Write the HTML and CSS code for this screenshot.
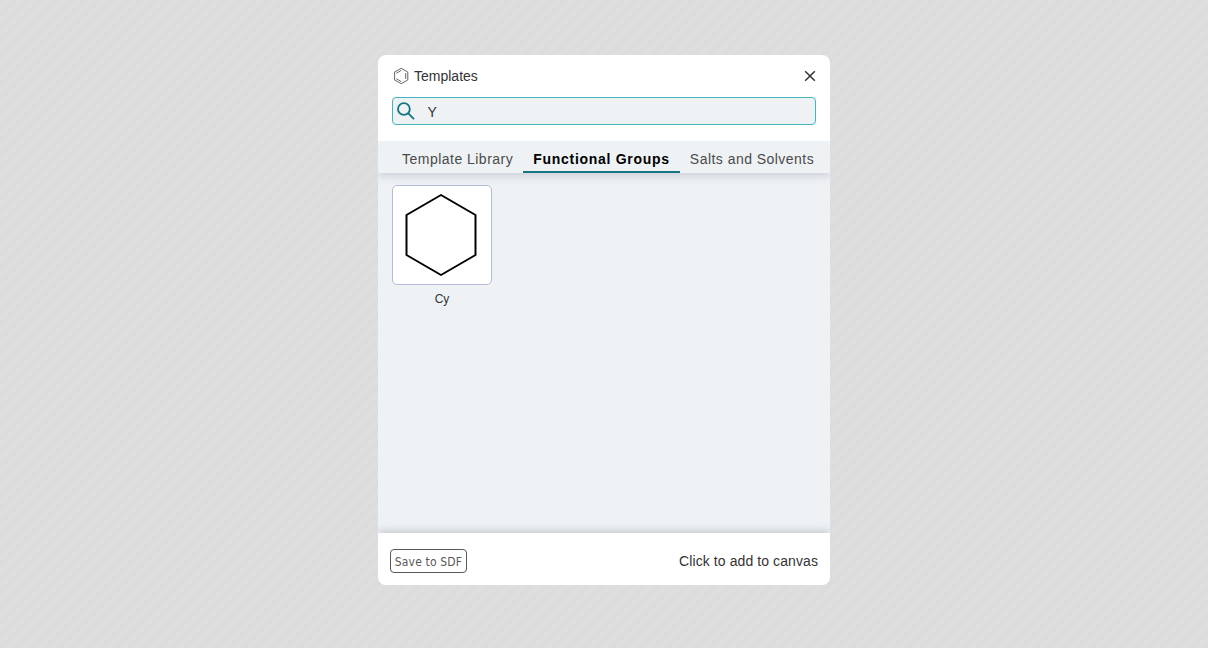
FILE: index.html
```html
<!DOCTYPE html>
<html lang="en">
<head>
<meta charset="utf-8">
<title>Templates</title>
<link rel="stylesheet" href="styles.css">
</head>
<body>
<div class="overlay">
  <section class="dialog">
    <header class="header">
      <svg class="logo" width="16" height="18" viewBox="0 0 16 18"><path d="M8.200 1.300 14.800 5v8L8.200 16.700 1.600 13V5ZM3.400 6.200 8.200 3.400M12.700 6v6M3.400 11.800 8.200 14.600"/></svg>
      <h1 class="title">Templates</h1>
      <button class="close" aria-label="Close"><svg width="12" height="12" viewBox="0 0 12 12"><path d="m1.200 1.200 9.600 9.600m0-9.600-9.600 9.600"/></svg></button>
    </header>
    <div class="search">
      <svg width="20" height="20" viewBox="0 0 20 20"><circle cx="6.900" cy="8" r="5.900"/><path d="m11.300 12.400 5.700 5.800"/></svg>
      <span class="query">Y</span>
    </div>
    <nav class="tabs">
      <button class="tab">Template Library</button>
      <button class="tab active">Functional Groups</button>
      <button class="tab last">Salts and Solvents</button>
    </nav>
    <main class="content">
      <figure class="item">
        <div class="card"><svg width="98" height="98" viewBox="0 0 98 98"><path d="M48 9 82.500 29v40L48 89 13.500 69V29Z"/></svg></div>
        <figcaption>Cy</figcaption>
      </figure>
    </main>
    <footer class="footer">
      <button class="save">Save to SDF</button>
      <span class="hint">Click to add to canvas</span>
    </footer>
  </section>
</div>
</body>
</html>
```

FILE: styles.css
```css
* { box-sizing: border-box; }
body { margin: 0; font-family: "Liberation Sans", Arial, sans-serif; color: #333; }
button { margin: 0; padding: 0; border: 0; background: none; font-family: inherit; }
svg { display: block; fill: none; }
.overlay {
  height: 648px;
  padding-top: 55px;
  background: repeating-linear-gradient(-45deg, #dcdcdc, #dcdcdc 5px, #dedede 5px, #dedede 10px);
}
.dialog {
  display: flex;
  flex-direction: column;
  width: 452px;
  height: 530px;
  margin: 0 auto;
  overflow: hidden;
  border-radius: 8px;
  background: #fff;
}
.header { display: flex; align-items: center; height: 42px; padding: 0 14px 0 15px; }
.logo { stroke: #555; stroke-width: .9; }
.title { margin: 0 auto 0 5px; font-size: 14px; font-weight: 400; }
.close svg { stroke: #333; stroke-width: 1.5; }
.search {
  display: flex;
  align-items: center;
  height: 28px;
  margin: 0 14px 16px;
  padding-left: 4px;
  border: 1px solid #43b5c0;
  border-radius: 4px;
  background: #eef2f5;
  font-size: 14px;
}
.search svg { stroke: #167782; stroke-width: 1.9; }
.query { margin-left: 10.500px; padding-top: 2px; }
.tabs {
  position: relative;
  display: flex;
  flex: none;
  height: 32px;
  padding-left: 14px;
  background: #eef2f5;
  box-shadow: 0 3px 8px rgba(103, 104, 132, .25);
  clip-path: inset(0 0 -14px);
}
.tab {
  padding: 6px 10px 0;
  border-bottom: 2px solid transparent;
  color: #4a4a4a;
  font-size: 14px;
  letter-spacing: .48px;
  white-space: nowrap;
}
.active { border-color: #167782; color: #000; font-weight: 700; letter-spacing: .72px; }
.last { letter-spacing: .46px; }
.content { flex: 1; padding: 12px 14px; background: #eef2f5; }
.item { width: 100px; margin: 0; font-size: 12px; text-align: center; }
.card { height: 100px; margin-bottom: 7px; border: 1px solid #b4b9dd; border-radius: 5px; background: #fff; }
.card path { stroke: #000; stroke-width: 2; stroke-linejoin: round; }
.footer {
  position: relative;
  display: flex;
  align-items: center;
  justify-content: space-between;
  height: 52px;
  padding: 4px 12px 0;
  background: #fff;
  box-shadow: 0 -2px 8px rgba(80, 90, 105, .28);
  font-size: 14px;
}
.hint { letter-spacing: .09px; }
.save {
  width: 77px;
  height: 24px;
  padding-top: 1px;
  border: 1px solid #585858;
  border-radius: 4px;
  color: #585858;
  font-family: "DejaVu Sans Condensed", "DejaVu Sans", sans-serif;
  font-size: 12px;
  letter-spacing: .16px;
  white-space: nowrap;
}
```
